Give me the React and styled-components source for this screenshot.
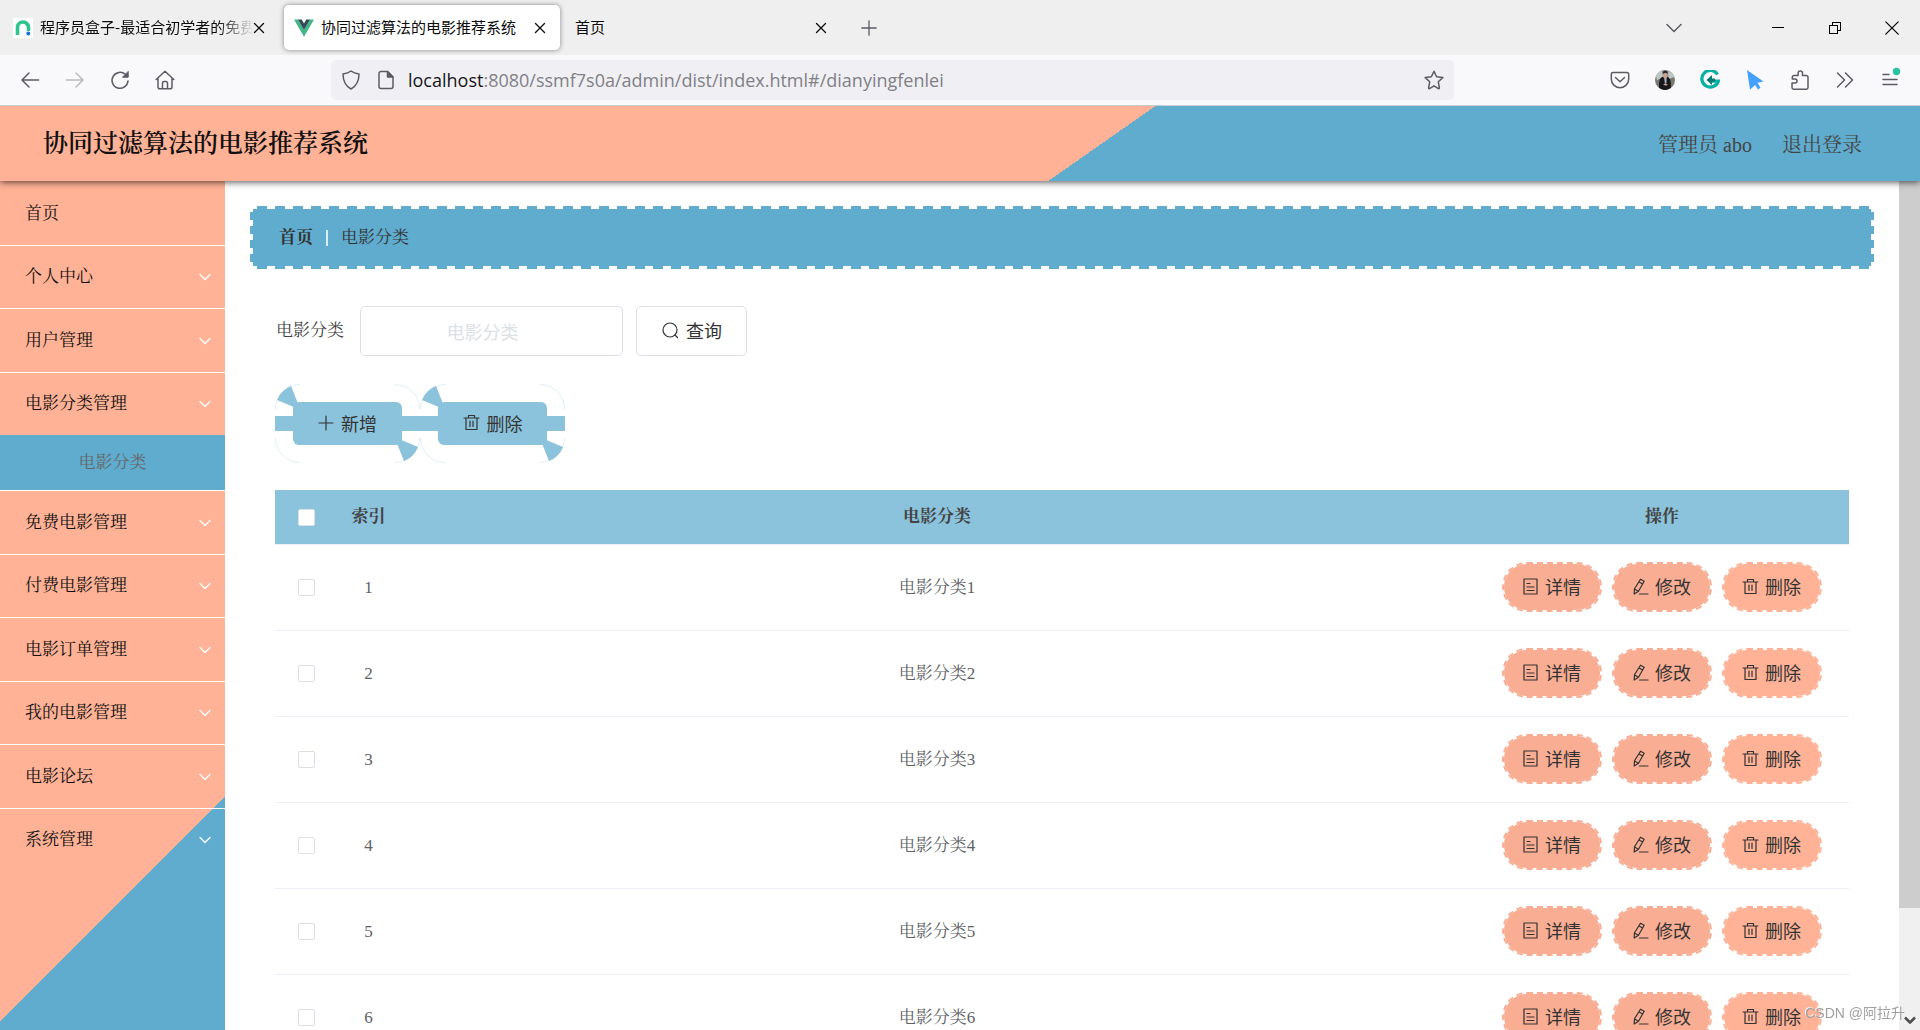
import React, { useState } from "react";
import styled, { createGlobalStyle } from "styled-components";

const serif = `"Liberation Serif", "Noto Serif CJK SC", "Noto Sans CJK SC", serif`;
const sans = `"Noto Sans CJK SC", "Noto Sans", sans-serif`;

const peach = "#ffb296";
const darkPeach = "#f9ad93";
const blue = "#5facce";
const lightBlue = "#8bc3dd";

const GlobalStyle = createGlobalStyle`
  * {
    box-sizing: border-box;
  }
  body {
    margin: 0;
    overflow: hidden;
    background: #fff;
    font-family: ${serif};
  }
  button, input {
    font-family: inherit;
  }
  a {
    color: inherit;
    text-decoration: none;
  }
`;

const Window = styled.div`
  display: flex;
  flex-direction: column;
  height: 100vh;
  overflow: hidden;
`;

/* ---------- browser ---------- */

const TabBar = styled.div`
  display: flex;
  align-items: center;
  height: 55px;
  flex-shrink: 0;
  gap: 5px;
  padding-left: 3px;
  background: #efefef;
  font-family: ${sans};
`;

const Tab = styled.div`
  display: flex;
  align-items: center;
  gap: 7px;
  width: 276px;
  height: 45px;
  padding: 0 10px;
  border-radius: 5px;
  background: ${(props) => (props.$active ? "#fff" : "transparent")};
  box-shadow: ${(props) =>
    props.$active ? "0 0 5px rgba(0, 0, 0, 0.45)" : "none"};
`;

const TabTitle = styled.span`
  flex: 1;
  min-width: 0;
  margin-right: -14px;
  padding-bottom: 2px;
  white-space: nowrap;
  font-size: 15px;
  line-height: 22px;
  color: #0c0c0d;
  mask-image: ${(props) =>
    props.$fade
      ? "linear-gradient(to right, #000 82%, transparent 99%)"
      : "none"};
`;

const IconButton = styled.button`
  display: flex;
  align-items: center;
  justify-content: center;
  width: ${(props) => props.$size || 45}px;
  height: ${(props) => (props.$size ? props.$size : 40)}px;
  flex-shrink: 0;
  padding: 0;
  border: none;
  background: none;
  color: ${(props) => props.$color || "#5b5b66"};
`;

const WindowControls = styled.div`
  display: flex;
  align-items: center;
  margin-left: auto;
`;

const ToolBar = styled.div`
  display: flex;
  align-items: center;
  height: 51px;
  flex-shrink: 0;
  z-index: 2;
  padding: 0 8px 0 7px;
  border-bottom: 1px solid #cccccf;
  background: #f9f9fb;
`;

const AddressBar = styled.div`
  display: flex;
  align-items: center;
  flex: 1;
  max-width: 1123px;
  height: 40px;
  margin-left: 144px;
  padding: 0 3px;
  border-radius: 5px;
  background: #f0f0f4;
`;

const AddressIcons = styled.div`
  display: flex;
  gap: 15px;
  padding: 0 12px 0 7px;
  color: #5b5b66;
`;

const Address = styled.span`
  flex: 1;
  font-family: "Open Sans", "Noto Sans", sans-serif;
  font-size: 18px;
  line-height: 24px;
  color: #808086;

  b {
    font-weight: 400;
    color: #15141a;
  }
`;

const Extensions = styled.div`
  display: flex;
  margin-left: auto;
`;

/* ---------- page ---------- */

const Header = styled.header`
  display: flex;
  align-items: center;
  justify-content: space-between;
  height: 75px;
  flex-shrink: 0;
  padding: 0 58px 0 43px;
  z-index: 1;
  background: linear-gradient(145deg, ${peach} 57%, ${blue} 57%);
  box-shadow: 0 1px 7px rgba(0, 0, 0, 0.7);
`;

const Title = styled.h1`
  margin: 0;
  font-size: 25px;
  line-height: 36px;
  font-weight: 600;
  color: #111;
`;

const UserMenu = styled.nav`
  display: flex;
  gap: 30px;
  padding-top: 2px;
  font-size: 20px;
  line-height: 28px;
  color: #444;
`;

const Body = styled.div`
  display: flex;
  flex: 1;
  min-height: 0;
`;

const SideBar = styled.aside`
  width: 225px;
  flex-shrink: 0;
  padding-top: 1px;
  background: linear-gradient(135deg, ${peach} 594px, ${blue} 594px);
`;

const Menu = styled.ul`
  margin: 0;
  padding: 0;
  list-style: none;
`;

const MenuItem = styled.li`
  border-bottom: 1px solid #fff;

  &:last-child {
    border-bottom: none;
  }
  &:nth-child(odd) > a {
    height: 63px;
  }
`;

const MenuLink = styled.a`
  display: flex;
  align-items: center;
  justify-content: space-between;
  height: 62px;
  padding: 0 13px 0 25px;
  font-size: 17px;
  line-height: 24px;
  color: #111;
`;

const SubLink = styled.a`
  display: flex;
  align-items: center;
  justify-content: center;
  height: 55px;
  background: ${blue};
  font-size: 17px;
  line-height: 24px;
  color: #666;
`;

const Content = styled.main`
  flex: 1;
  min-width: 0;
  overflow: hidden;
  padding: 25px 25px 0;
`;

const dashes = `repeating-linear-gradient(to right, #fff 0 7px, transparent 7px 17px, #fff 17px 18px)`;
const sideDashes = `repeating-linear-gradient(to bottom, #fff 0 6px, transparent 6px 14px)`;

const Breadcrumb = styled.nav`
  display: flex;
  align-items: center;
  gap: 13px;
  height: 63px;
  padding: 0 29px;
  border-radius: 5px;
  background: ${dashes} top / 100% 3px no-repeat,
    ${dashes} bottom / 100% 3px no-repeat,
    ${sideDashes} left / 3px 100% no-repeat,
    ${sideDashes} right / 3px 100% no-repeat,
    ${blue};
  font-size: 17px;
  line-height: 24px;
  color: #333;
`;

const Separator = styled.span`
  width: 2px;
  height: 16px;
  background: #d8edf6;
`;

const Panel = styled.div`
  padding: 37px 25px 0;
`;

const SearchForm = styled.form`
  display: flex;
  align-items: center;
  font-size: 17px;
  line-height: 24px;
  color: #444;

  label {
    width: 85px;
    padding-left: 1px;
  }
`;

const SearchInput = styled.input`
  width: 263px;
  height: 50px;
  padding: 0 30px 0 12px;
  border: 1px solid #dcdfe6;
  border-radius: 5px;
  font-family: ${sans};
  font-size: 18px;
  text-align: center;

  &::placeholder {
    color: #dcdfe6;
  }
`;

const SearchButton = styled.button`
  display: flex;
  align-items: center;
  justify-content: center;
  gap: 7px;
  width: 111px;
  height: 50px;
  margin-left: 13px;
  padding: 0 0 2px;
  border: 1px solid #dcdfe6;
  border-radius: 5px;
  background: #fff;
  font-family: ${sans};
  font-size: 18px;
  color: #333;
`;

const Actions = styled.div`
  display: flex;
  padding: 28px 0 27px;
`;

const RibbonButton = styled.button`
  display: grid;
  width: 145px;
  height: 79px;
  padding: 0;
  border: none;
  background: none;
  font-family: ${sans};
  font-size: 18px;
  color: #333;

  > * {
    grid-area: 1 / 1;
  }
`;

const RibbonLabel = styled.span`
  display: flex;
  align-items: center;
  justify-content: center;
  gap: 7px;
  margin: 18px;
  padding-bottom: 2px;
  border-radius: 6px;
  background: ${lightBlue};
`;

const Table = styled.table`
  width: 100%;
  table-layout: fixed;
  border-spacing: 0;
  font-size: 17px;
  line-height: 24px;
  color: #606266;
  text-align: center;

  th,
  td {
    padding: 0;
    border-bottom: 1px solid #ebeef5;
  }
  th {
    height: 55px;
    background: ${lightBlue};
    color: #444;
  }
  td {
    height: 86px;
  }
`;

const Column = styled.col`
  width: ${(props) => props.$width};
`;

const CheckBox = styled.input`
  display: block;
  appearance: none;
  width: 17px;
  height: 17px;
  margin: 0 auto;
  border: 1px solid #dcdfe6;
  border-radius: 2px;
  background: #fff;

  &:checked {
    background: ${blue};
  }
`;

const RowActions = styled.div`
  display: flex;
  justify-content: center;
  gap: 10px;
  padding: 0 1px 1px 0;
`;

const RowButton = styled.button`
  display: flex;
  align-items: center;
  justify-content: center;
  gap: 6px;
  width: 100px;
  height: 50px;
  padding: 0 0 2px;
  border: 2px dashed ${(props) => (props.$bright ? peach : darkPeach)};
  border-radius: 25px;
  background: ${(props) => (props.$bright ? peach : darkPeach)} padding-box;
  font-family: ${sans};
  font-size: 18px;
  color: #333;
`;

const ScrollTrack = styled.div`
  display: flex;
  flex-direction: column;
  justify-content: space-between;
  align-items: center;
  width: 21px;
  padding-bottom: 4px;
  background: #f0f0f0;
  color: #505050;
`;

const ScrollThumb = styled.div`
  width: 100%;
  height: 86%;
  background: #cdcdcd;
`;

const Watermark = styled.div`
  position: fixed;
  right: 15px;
  bottom: 6px;
  z-index: 2;
  font-family: "Liberation Sans", "Noto Sans CJK SC", sans-serif;
  font-size: 14px;
  line-height: 22px;
  color: #a0a0a0;
  text-shadow: -1px -1px 0 rgba(255, 255, 255, 0.8);
`;

/* ---------- icons ---------- */

const Icon = ({ size = 20, box = 20, width = 1.5, children, ...rest }) => (
  <svg
    width={size}
    height={size}
    viewBox={`0 0 ${box} ${box}`}
    fill="none"
    stroke="currentColor"
    strokeWidth={width}
    strokeLinecap="round"
    strokeLinejoin="round"
    aria-hidden="true"
    {...rest}
  >
    {children}
  </svg>
);

const CloseIcon = () => (
  <Icon size={12} box={12} width={1.3}>
    <path d="M1.5 1.5l9 9M10.5 1.5l-9 9" />
  </Icon>
);

const BoxLogo = () => (
  <svg width="20" height="20" viewBox="0 0 20 20" aria-hidden="true">
    <rect width="20" height="20" fill="#fff" />
    <path
      d="M4.500 17V9.500a5.500 5.500 0 0 1 11 0V13"
      fill="none"
      stroke="#2fc48d"
      strokeWidth="3.600"
    />
    <circle cx="15.300" cy="15.500" r="2" fill="#1f6fe5" />
  </svg>
);

const VueLogo = () => (
  <svg width="20" height="20" viewBox="0 0 20 20" aria-hidden="true">
    <path d="M0 1.500h4L10 12l6-10.500h4L10 18.700z" fill="#41b883" />
    <path d="M4 1.500h3.700L10 5.500l2.300-4H16L10 12z" fill="#35495e" />
  </svg>
);

const SearchIcon = () => (
  <Icon size={18} box={18} width={1.2}>
    <circle cx="9" cy="9" r="7" />
    <path d="M14 14l2.500 2.500" />
  </Icon>
);

const PlusIcon = () => (
  <Icon size={16} box={16} width={1.2}>
    <path d="M8 1v14M1 8h14" />
  </Icon>
);

const DeleteIcon = () => (
  <Icon size={17} box={17} width={1.2}>
    <path d="M1 4h15M3 4v11.500h11V4M5.500 4V1.500h6V4M7 7v5.500M10 7v5.500" />
  </Icon>
);

const DetailIcon = () => (
  <Icon size={17} box={17} width={1.2}>
    <path d="M2 1h13v15H2zM5 5.500h3M5 9h7M5 12.500h7" />
  </Icon>
);

const EditIcon = () => (
  <Icon size={17} box={17} width={1.2}>
    <path d="M8.500 1.200l3.700 2-5.700 10-4.300 2.800.3-5.200zM7 4l3.700 2M2.500 11l3.500 2M7.500 16H16" />
  </Icon>
);

const Ribbon = () => (
  <svg width="145" height="79" viewBox="0 0 145 79" aria-hidden="true">
    <path
      d="M.5 25A24.500 24.500 0 0 1 25 .5M120 .5A24.500 24.500 0 0 1 144.500 25M144.500 54A24.500 24.500 0 0 1 120 78.500M25 78.500A24.500 24.500 0 0 1 .5 54"
      fill="none"
      stroke="#dfeff6"
      strokeWidth="1"
    />
    <path
      d="M0 32H145V47H0zM2 16A25 25 0 0 1 16 2L24 22 21 24zM143 63A25 25 0 0 1 129 77L121 57 124 55z"
      fill={lightBlue}
    />
  </svg>
);

/* ---------- data ---------- */

const menu = [
  { name: "首页" },
  { name: "个人中心", more: true },
  { name: "用户管理", more: true },
  { name: "电影分类管理", more: true, child: "电影分类" },
  { name: "免费电影管理", more: true },
  { name: "付费电影管理", more: true },
  { name: "电影订单管理", more: true },
  { name: "我的电影管理", more: true },
  { name: "电影论坛", more: true },
  { name: "系统管理", more: true },
];

const rows = [1, 2, 3, 4, 5, 6].map((id) => ({ id, name: `电影分类${id}` }));

const Browser = () => (
  <>
    <TabBar>
      <Tab>
        <BoxLogo />
        <TabTitle $fade>程序员盒子-最适合初学者的免费</TabTitle>
        <IconButton $size={20} $color="#0c0c0d" aria-label="关闭标签页">
          <CloseIcon />
        </IconButton>
      </Tab>
      <Tab $active>
        <VueLogo />
        <TabTitle>协同过滤算法的电影推荐系统</TabTitle>
        <IconButton $size={20} $color="#0c0c0d" aria-label="关闭标签页">
          <CloseIcon />
        </IconButton>
      </Tab>
      <Tab>
        <TabTitle>首页</TabTitle>
        <IconButton $size={20} $color="#0c0c0d" aria-label="关闭标签页">
          <CloseIcon />
        </IconButton>
      </Tab>
      <IconButton aria-label="新建标签页">
        <Icon size={16} box={16} width={1.3}>
          <path d="M8 .8v14.400M.8 8h14.400" />
        </Icon>
      </IconButton>
      <WindowControls>
        <IconButton $size={57} aria-label="列出标签页">
          <Icon size={16} box={16}>
            <path d="M1 4.500l7 7 7-7" />
          </Icon>
        </IconButton>
        <IconButton $size={47} aria-hidden="true" tabIndex={-1} />
        <IconButton $size={57} $color="#000" aria-label="最小化">
          <Icon size={12} box={12} width={1} shapeRendering="crispEdges">
            <path d="M0 5.500h12" />
          </Icon>
        </IconButton>
        <IconButton $size={57} $color="#000" aria-label="还原">
          <Icon size={12} box={12} width={1} shapeRendering="crispEdges">
            <path d="M.5 3.500h8v8h-8zM3.500 3.500v-3h8v8h-3" />
          </Icon>
        </IconButton>
        <IconButton $size={57} $color="#000" aria-label="关闭">
          <Icon size={14} box={14} width={1.2}>
            <path d="M.8.8l12.400 12.400M13.200.8L.8 13.200" />
          </Icon>
        </IconButton>
      </WindowControls>
    </TabBar>
    <ToolBar>
      <IconButton aria-label="后退">
        <Icon>
          <path d="M18.500 10H2M9 3l-7 7 7 7" />
        </Icon>
      </IconButton>
      <IconButton $color="#bcbcc1" aria-label="前进">
        <Icon>
          <path d="M1.500 10H18M11 3l7 7-7 7" />
        </Icon>
      </IconButton>
      <IconButton aria-label="刷新">
        <Icon>
          <path d="M18 11a8 8 0 1 1-2.500-6.500L17.500 6.500" />
          <path d="M18.200 1.800v5.400h-5.400z" fill="currentColor" strokeWidth="1" />
        </Icon>
      </IconButton>
      <IconButton aria-label="主页">
        <Icon>
          <path d="M1.200 9.500L10 1.200l8.800 8.300M3 8.500V17a1.800 1.800 0 0 0 1.800 1.800h10.400A1.800 1.800 0 0 0 17 17V8.500M7.500 18.500V13a1.500 1.500 0 0 1 1.500-1.500h2a1.500 1.500 0 0 1 1.500 1.500v5.500" />
        </Icon>
      </IconButton>
      <AddressBar>
        <AddressIcons>
          <Icon>
            <path d="M10 1c2 1.500 5 2.500 8 3 0 7-2.500 12-8 15-5.500-3-8-8-8-15 3-.5 6-1.500 8-3z" />
          </Icon>
          <Icon>
            <path d="M11.500 1.500H5A2 2 0 0 0 3 3.500v13a2 2 0 0 0 2 2h10a2 2 0 0 0 2-2V7z" />
            <path d="M11.500 1.500V7H17z" fill="currentColor" />
          </Icon>
        </AddressIcons>
        <Address>
          <b>localhost</b>:8080/ssmf7s0a/admin/dist/index.html#/dianyingfenlei
        </Address>
        <IconButton $size={34} aria-label="添加书签">
          <Icon>
            <path d="M10 1.200l2.600 5.600 6.200.8-4.500 4.200 1.100 6.200c0 .7-.5.9-1 .6L10 15.800l-4.400 2.800c-.5.300-1 .1-1-.6l1.100-6.200-4.500-4.200 6.200-.8z" />
          </Icon>
        </IconButton>
      </AddressBar>
      <Extensions>
        <IconButton aria-label="Pocket">
          <Icon>
            <path d="M3 2.500h14a1.700 1.700 0 0 1 1.700 1.700V9a8.700 8.700 0 0 1-17.400 0V4.200A1.700 1.700 0 0 1 3 2.500zM5.500 7.500l4.500 4.200 4.500-4.200" />
          </Icon>
        </IconButton>
        <IconButton aria-label="账户">
          <svg width="20" height="20" viewBox="0 0 20 20">
            <circle cx="10" cy="10" r="10" fill="#77796f" />
            <path d="M1 6a10 10 0 0 1 6-5.500l1 6-6 4zM13 1a10 10 0 0 1 6.500 6l-6 2z" fill="#c0c5c3" />
            <path d="M4 17.800c0-5 0-9.800 3.500-10.800h5c3 1 3.500 5 3.500 10.800a10 10 0 0 1-12 0z" fill="#17181d" />
            <path d="M9 7h2.500v6L10 14z" fill="#aeb5c0" />
            <path d="M8 3.500a2.300 2.300 0 0 1 4.500 0V6a2.200 2.200 0 0 1-4.500 0z" fill="#c8a08c" />
            <path d="M7.800 3.800c0-4 5-4 5 0L10.500 2.800z" fill="#222" />
            <path d="M8 14.500l2-1 3 1-2 1.200z" fill="#c8a08c" />
          </svg>
        </IconButton>
        <IconButton aria-label="扩展">
          <svg width="20" height="20" viewBox="0 0 20 20">
            <path
              d="M17.500 4.500A8.400 8.400 0 1 0 18.300 11.200H12"
              fill="none"
              stroke="#06b0a2"
              strokeWidth="3.200"
            />
            <path d="M6.500 10L12 5v3.500h3v3h-3V15z" fill="#087a74" />
          </svg>
        </IconButton>
        <IconButton $color="#45a1ff" aria-label="指针扩展">
          <svg width="20" height="20" viewBox="0 0 20 20">
            <path d="M2 0l16.500 11.500-6 1.200 3 5-2.500 1.800-3-4.500L5 19.800z" fill="currentColor" />
          </svg>
        </IconButton>
        <IconButton aria-label="附加组件">
          <Icon>
            <path d="M2 13v4.500A1.700 1.700 0 0 0 3.700 19.200h12.600a1.700 1.700 0 0 0 1.700-1.700V7.200a1.700 1.700 0 0 0-1.700-1.700H12.500V3.200a2.200 2.200 0 0 0-4.400 0V5.500H4A1.700 1.700 0 0 0 2.300 7.200V9H5a2 2 0 0 1 0 4z" />
          </Icon>
        </IconButton>
        <IconButton aria-label="更多工具">
          <Icon>
            <path d="M2.500 3l7 7-7 7M10.500 3l7 7-7 7" />
          </Icon>
        </IconButton>
        <IconButton aria-label="打开菜单">
          <Icon size={28} box={28}>
            <path d="M7 8.500h6M7 13.500h14M7 18.500h14" />
            <circle cx="20.500" cy="5.500" r="3.700" fill="#2ac3a2" stroke="none" />
          </Icon>
        </IconButton>
      </Extensions>
    </ToolBar>
  </>
);

const App = () => {
  const [checked, setChecked] = useState([]);

  const toggle = (id) => {
    setChecked(
      checked.includes(id) ? checked.filter((c) => c !== id) : [...checked, id]
    );
  };

  const toggleAll = (e) => {
    setChecked(e.target.checked ? rows.map((row) => row.id) : []);
  };

  return (
    <Window>
      <GlobalStyle />
      <Browser />
      <Header>
        <Title>协同过滤算法的电影推荐系统</Title>
        <UserMenu>
          <span>管理员 abo</span>
          <a href="#/login">退出登录</a>
        </UserMenu>
      </Header>
      <Body>
        <SideBar>
          <Menu>
            {menu.map((item) => (
              <MenuItem key={item.name}>
                <MenuLink href="#/">
                  {item.name}
                  {item.more && (
                    <Icon size={14} box={14} width={1.3} stroke="#fff">
                      <path d="M2 4.500l5 5 5-5" />
                    </Icon>
                  )}
                </MenuLink>
                {item.child && (
                  <SubLink href="#/dianyingfenlei">{item.child}</SubLink>
                )}
              </MenuItem>
            ))}
          </Menu>
        </SideBar>
        <Content>
          <Breadcrumb>
            <a href="#/">
              <b>首页</b>
            </a>
            <Separator />
            <span>电影分类</span>
          </Breadcrumb>
          <Panel>
            <SearchForm onSubmit={(e) => e.preventDefault()}>
              <label htmlFor="category">电影分类</label>
              <SearchInput id="category" type="text" placeholder="电影分类" />
              <SearchButton type="submit">
                <SearchIcon />
                查询
              </SearchButton>
            </SearchForm>
            <Actions>
              <RibbonButton type="button">
                <Ribbon />
                <RibbonLabel>
                  <PlusIcon />
                  新增
                </RibbonLabel>
              </RibbonButton>
              <RibbonButton type="button">
                <Ribbon />
                <RibbonLabel>
                  <DeleteIcon />
                  删除
                </RibbonLabel>
              </RibbonButton>
            </Actions>
            <Table>
              <colgroup>
                <Column $width="63px" />
                <Column $width="61px" />
                <Column $width="auto" />
                <Column $width="374px" />
              </colgroup>
              <thead>
                <tr>
                  <th>
                    <CheckBox
                      type="checkbox"
                      aria-label="全选"
                      checked={checked.length === rows.length}
                      onChange={toggleAll}
                    />
                  </th>
                  <th>索引</th>
                  <th>电影分类</th>
                  <th>操作</th>
                </tr>
              </thead>
              <tbody>
                {rows.map((row) => (
                  <tr key={row.id}>
                    <td>
                      <CheckBox
                        type="checkbox"
                        aria-label={row.name}
                        checked={checked.includes(row.id)}
                        onChange={() => toggle(row.id)}
                      />
                    </td>
                    <td>{row.id}</td>
                    <td>{row.name}</td>
                    <td>
                      <RowActions>
                        <RowButton type="button">
                          <DetailIcon />
                          详情
                        </RowButton>
                        <RowButton type="button">
                          <EditIcon />
                          修改
                        </RowButton>
                        <RowButton type="button" $bright>
                          <DeleteIcon />
                          删除
                        </RowButton>
                      </RowActions>
                    </td>
                  </tr>
                ))}
              </tbody>
            </Table>
          </Panel>
        </Content>
        <ScrollTrack>
          <ScrollThumb />
          <Icon size={12} box={12} width={2.6} strokeLinecap="butt">
            <path d="M1 3.500l5 5 5-5" />
          </Icon>
        </ScrollTrack>
      </Body>
      <Watermark>CSDN @阿拉升</Watermark>
    </Window>
  );
};

export default App;
